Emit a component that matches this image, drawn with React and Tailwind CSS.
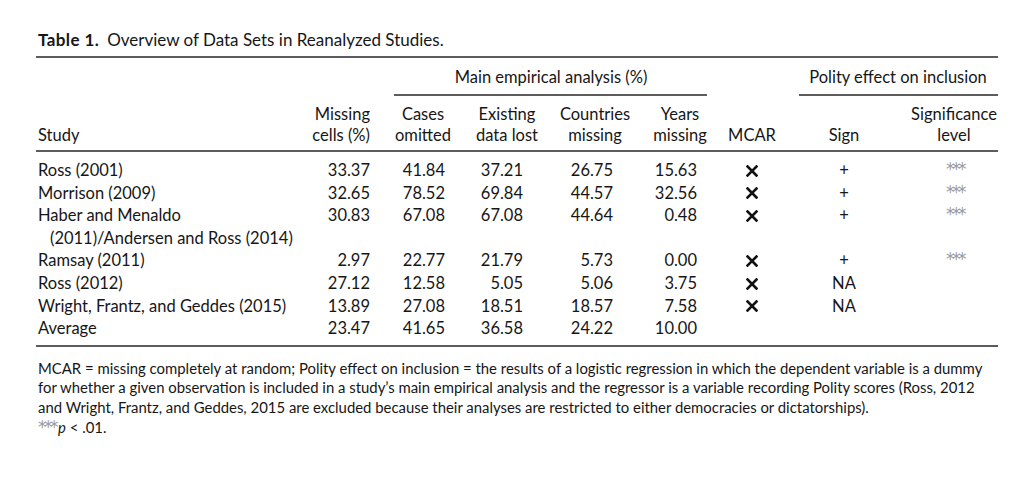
import React from 'react'

const cols = 'grid grid-cols-[264px_78px_90px_78px_98px_72px_72px_122px_88px]'

const rows = [
  { study: ['Ross (2001)'], v: ['33.37', '41.84', '37.21', '26.75', '15.63'], mcar: true, sign: '+', sig: true },
  { study: ['Morrison (2009)'], v: ['32.65', '78.52', '69.84', '44.57', '32.56'], mcar: true, sign: '+', sig: true },
  {
    study: ['Haber and Menaldo', '(2011)/Andersen and Ross (2014)'],
    v: ['30.83', '67.08', '67.08', '44.64', '0.48'],
    mcar: true,
    sign: '+',
    sig: true,
  },
  { study: ['Ramsay (2011)'], v: ['2.97', '22.77', '21.79', '5.73', '0.00'], mcar: true, sign: '+', sig: true },
  { study: ['Ross (2012)'], v: ['27.12', '12.58', '5.05', '5.06', '3.75'], mcar: true, sign: 'NA' },
  { study: ['Wright, Frantz, and Geddes (2015)'], v: ['13.89', '27.08', '18.51', '18.57', '7.58'], mcar: true, sign: 'NA' },
  { study: ['Average'], v: ['23.47', '41.65', '36.58', '24.22', '10.00'] },
]

// right padding that lines the numbers up under each header
const numPad = ['pr-[8px]', 'pr-[23px]', 'pr-[23px]', 'pr-[31px]', 'pr-[19px]']

function Cross() {
  return (
    <svg viewBox="0 0 12 12" className="h-[12px] w-[12px]" fill="none" stroke="#111" strokeWidth="2.6" strokeLinecap="square">
      <path d="M1.5 1.5 L10.5 10.5 M10.5 1.5 L1.5 10.5" />
    </svg>
  )
}

function Stars({ className = '' }) {
  return (
    <span
      className={`inline-block align-top text-[17px] leading-[14px] tracking-[-2.5px] text-[#9a9a9a] ${className}`}
      style={{ fontFamily: '"DejaVu Sans", sans-serif' }}
    >
      ***
    </span>
  )
}

function Rule({ className = '' }) {
  return <div className={`h-[2px] bg-[#5c5c5c] ${className}`} />
}

export default function App() {
  return (
    <div
      className="min-h-[484px] w-[1017px] bg-white pl-[36px] pt-[30px] text-[#161616]"
      style={{ fontFamily: 'Lato, "Open Sans", sans-serif' }}
    >
      <div className="w-[962px]">
        <p className="pl-[2px] text-[17px] leading-[20px]">
          <span className="font-bold tracking-[0.4px]">Table 1.</span>
          <span className="ml-[8px]">Overview of Data Sets in Reanalyzed Studies.</span>
        </p>
        <Rule className="mt-[6px]" />

        <div className={`${cols} pt-[8px] text-[16.5px]`}>
          <div className="col-span-2" />
          <div className="col-span-4 flex flex-col">
            <p className="pl-[8px] text-center leading-[22px]">Main empirical analysis (%)</p>
            <Rule className="ml-[16px] mr-[9px] mt-[6px]" />
          </div>
          <div />
          <div className="col-span-2 flex flex-col">
            <p className="pl-[10px] text-center leading-[22px]">Polity effect on inclusion</p>
            <Rule className="ml-[11px] mt-[6px]" />
          </div>
        </div>

        <div className={`${cols} pt-[8px] text-[16.5px] leading-[21px]`}>
          <div className="flex items-end pl-[2px]">Study</div>
          <div className="pr-[8px] text-right">
            Missing
            <br />
            cells (%)
          </div>
          <div className="text-center">
            Cases
            <br />
            omitted
          </div>
          <div className="text-center">
            Existing
            <br />
            data lost
          </div>
          <div className="text-center">
            Countries
            <br />
            missing
          </div>
          <div className="text-center">
            Years
            <br />
            missing
          </div>
          <div className="flex items-end justify-center">MCAR</div>
          <div className="flex items-end justify-center pr-[10px]">Sign</div>
          <div className="text-center">
            Significance
            <br />
            level
          </div>
        </div>
        <Rule className="mt-[4px]" />

        <div className="pt-[7px] text-[16.5px] leading-[22.6px]">
          {rows.map((r) => (
            <div key={r.study[0]} className={cols}>
              <div className="pl-[2px]">
                {r.study.map((s, i) => (
                  <div key={s} className={i > 0 ? 'pl-[12px]' : ''}>
                    {s}
                  </div>
                ))}
              </div>
              {r.v.map((n, i) => (
                <div key={i} className={`text-right ${numPad[i]}`}>
                  {n}
                </div>
              ))}
              <div className="flex h-[22.6px] items-center justify-center pt-[1px]">{r.mcar && <Cross />}</div>
              <div className="pr-[10px] text-center">{r.sign}</div>
              <div className="flex h-[22.6px] justify-center pt-[3px] pl-[2px]">{r.sig && <Stars />}</div>
            </div>
          ))}
        </div>
        <Rule className="mt-[5px]" />

        <div className="whitespace-nowrap pl-[2px] pt-[12px] text-[14.9px] leading-[19.7px]">
          <p>
            MCAR = missing completely at random; Polity effect on inclusion = the results of a logistic regression in
            which the dependent variable is a dummy
          </p>
          <p>
            for whether a given observation is included in a study’s main empirical analysis and the regressor is a
            variable recording Polity scores (Ross, 2012
          </p>
          <p>and Wright, Frantz, and Geddes, 2015 are excluded because their analyses are restricted to either democracies or dictatorships).</p>
          <p>
            <Stars className="mr-[2px] mt-[2px]" />
            <span className="italic">p</span> &lt; .01.
          </p>
        </div>
      </div>
    </div>
  )
}
